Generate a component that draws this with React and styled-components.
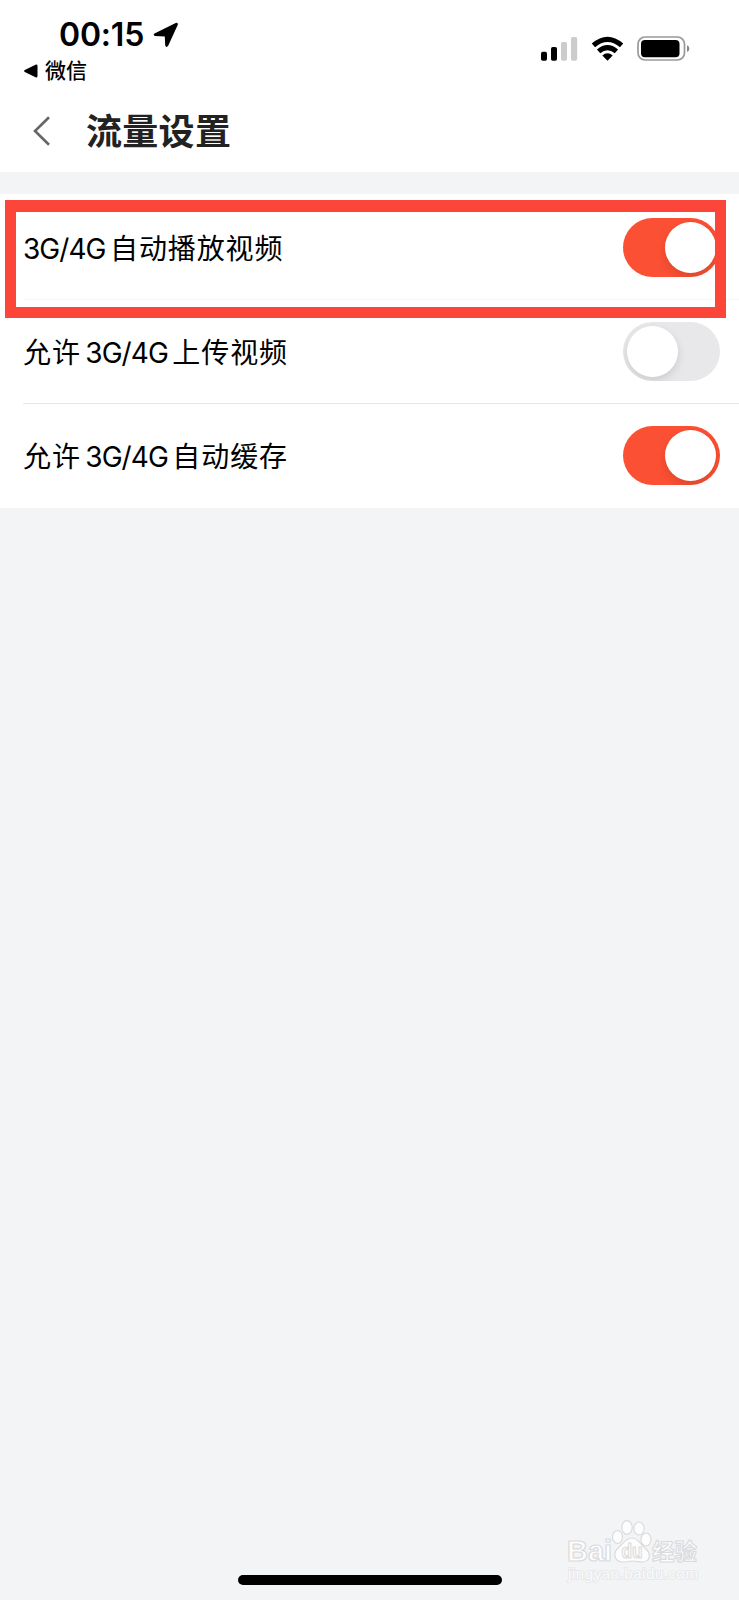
import React from "react";
import styled, { createGlobalStyle } from "styled-components";

const GlobalStyle = createGlobalStyle`
  *, *::before, *::after { box-sizing: border-box; }
  body { margin: 0; background: #f3f4f6; }
`;

const Screen = styled.main`
  position: relative;
  display: flex;
  flex-direction: column;
  width: 739px;
  height: 1600px;
  overflow: hidden;
  background: #f3f4f6;
  color: #000;
  font-family: Inter, "Noto Sans CJK SC", sans-serif;
`;

const StatusBar = styled.header`
  display: flex;
  justify-content: space-between;
  height: 90px;
  padding: 18px 49px 0 24px;
  background: #fff;
`;

const StatusLeft = styled.div`
  display: flex;
  flex-direction: column;
`;

const Clock = styled.div`
  display: flex;
  align-items: center;
  gap: 9px;
  height: 33px;
  padding-left: 35px;
  font-size: 32px;
  font-weight: 600;
  line-height: 33px;
  letter-spacing: -0.2px;
`;

const BackToApp = styled.div`
  display: flex;
  align-items: center;
  gap: 7px;
  height: 24px;
  margin-top: 8px;
  font-size: 21px;
  font-weight: 500;
  line-height: 24px;
`;

const StatusIcons = styled.div`
  display: flex;
  align-items: flex-start;
  padding-top: 18px;
`;

const StatusIcon = styled.svg`
  display: block;
  margin-left: ${({ $gap }) => $gap || 0}px;
`;

const NavBar = styled.nav`
  display: flex;
  align-items: center;
  gap: 35px;
  height: 82px;
  padding-left: 33px;
  background: #fff;
`;

const Title = styled.h1`
  margin: 0;
  padding-top: 2px;
  color: #222;
  font-size: 36px;
  font-weight: 700;
  line-height: 48px;
  letter-spacing: 0.3px;
`;

const Settings = styled.section`
  display: flex;
  flex-direction: column;
  margin-top: 22px;
  background: #fff;
`;

const Row = styled.div`
  display: flex;
  align-items: center;
  justify-content: space-between;
  height: ${({ $height }) => $height}px;
  margin-left: 23px;
  padding: ${({ $top }) => $top || 0}px 19px ${({ $bottom }) => $bottom || 0}px 0;
  border-bottom: ${({ $divider }) => ($divider ? `1px solid ${$divider}` : "none")};
`;

const Label = styled.div`
  display: flex;
  align-items: center;
  gap: 4.5px;
  padding-top: 3px;
  font-size: 28px;
  line-height: 42px;
  white-space: nowrap;
`;

const Latin = styled.span`
  letter-spacing: -0.95px;
`;

const Han = styled.span`
  letter-spacing: 0.9px;
`;

const Switch = styled.span`
  display: flex;
  justify-content: ${({ $on }) => ($on ? "flex-end" : "flex-start")};
  width: 97px;
  height: 59px;
  padding: 4px;
  overflow: hidden;
  border-radius: 30px;
  background: ${({ $on }) => ($on ? "#fb5033" : "#e8e8eb")};
`;

const Thumb = styled.span`
  width: 51px;
  height: 51px;
  border-radius: 50%;
  background: #fff;
  box-shadow: 0 4px 10px rgba(0, 0, 0, 0.12);
`;

const Highlight = styled.div`
  position: absolute;
  top: 200px;
  left: 5px;
  width: 721px;
  height: 118px;
  border: 11px solid #fd463a;
  border-top-width: 12px;
`;

const HomeIndicator = styled.div`
  position: absolute;
  bottom: 15px;
  left: 238px;
  width: 264px;
  height: 10px;
  border-radius: 5px;
  background: #000;
`;

const Watermark = styled.svg`
  position: absolute;
  right: 34px;
  bottom: 9px;
  font-family: "Liberation Sans", "Noto Sans CJK SC", sans-serif;
`;

const rows = [
  { parts: ["3G/4G", "自动播放视频"], on: true, height: 106, top: 1, divider: "#f6f6f6" },
  { parts: ["允许", "3G/4G", "上传视频"], on: false, height: 104, divider: "#e6e6e6" },
  { parts: ["允许", "3G/4G", "自动缓存"], on: true, height: 104, bottom: 2 },
];

function LocationArrow() {
  return (
    <StatusIcon width="26" height="26" viewBox="0 0 26 26">
      <path d="M2 11.2 L22.7 .9 Q25.3 .2 24.7 3 L15.3 23.6 Q13.3 26.6 12.2 23.3 L11.8 14.4 L2.2 13.9 Q-.8 12.8 2 11.2Z" />
    </StatusIcon>
  );
}

function Signal() {
  return (
    <StatusIcon width="38" height="25" viewBox="0 0 38 25">
      <rect x="1" y="15.8" width="6" height="9" rx="1.7" />
      <rect x="11" y="11" width="6" height="13.8" rx="1.7" />
      <rect x="21" y="6" width="6" height="18.8" rx="1.7" fill="#ccc" />
      <rect x="31" y="1" width="6.2" height="23.8" rx="1.7" fill="#ccc" />
    </StatusIcon>
  );
}

function Wifi() {
  return (
    <StatusIcon $gap={13} width="33" height="25" viewBox="0 0 33 25">
      <g fill="none" stroke="#000" strokeWidth="5">
        <path d="M2.4 9.4 Q16.5 -2.8 30.6 9.4" />
        <path d="M7.6 15.4 Q16.5 7.8 25.4 15.4" />
      </g>
      <path d="M11.3 19.4 Q16.5 15 21.7 19.4 L16.5 24.8Z" />
    </StatusIcon>
  );
}

function Battery() {
  return (
    <StatusIcon $gap={13} width="53" height="25" viewBox="0 0 53 25">
      <rect x="1" y="1" width="46.5" height="23" rx="7" fill="none" stroke="#999" strokeWidth="1.7" />
      <rect x="4" y="4" width="38.5" height="17.3" rx="4" />
      <path d="M50 9.3 Q52.4 10.2 52.4 12.7 Q52.4 15 50 16Z" fill="#888" />
    </StatusIcon>
  );
}

function BaiduMark() {
  return (
    <Watermark width="142" height="72" viewBox="0 0 142 72">
      <g fill="#fdfdfd" stroke="#dadbdd" strokeWidth="1.2" strokeLinejoin="round">
        <text x="4" y="42" fontSize="29" fontWeight="700" textLength="45" lengthAdjust="spacingAndGlyphs">Bai</text>
        <text x="89" y="41" fontSize="23" fontWeight="700" textLength="45" lengthAdjust="spacingAndGlyphs">经验</text>
        <ellipse cx="54.5" cy="18" rx="5" ry="6.5" />
        <ellipse cx="64" cy="8.5" rx="5.2" ry="6.8" />
        <ellipse cx="76" cy="9.5" rx="5.2" ry="6.5" />
        <ellipse cx="83" cy="20.5" rx="5" ry="6.5" />
        <path d="M69 19 C63 19 60 25 55 29 C49 35 52 43 60 43 C66 43 64 42 69 42 C74 42 76 43 80 43 C88 42 88 34 82 29 C77 25 75 19 69 19Z" />
        <text x="58.5" y="39" fontSize="20" fontWeight="700" textLength="21" lengthAdjust="spacingAndGlyphs">du</text>
      </g>
      <text x="5" y="60" fontSize="15" fill="#fafbfc" stroke="#e5e6e8" strokeWidth="1.6" paintOrder="stroke" textLength="130">jingyan.baidu.com</text>
    </Watermark>
  );
}

function SettingRow({ parts, on, height, top, bottom, divider }) {
  return (
    <Row $height={height} $top={top} $bottom={bottom} $divider={divider}>
      <Label>
        {parts.map((part) =>
          part === "3G/4G" ? <Latin key={part}>{part}</Latin> : <Han key={part}>{part}</Han>
        )}
      </Label>
      <Switch $on={on}>
        <Thumb />
      </Switch>
    </Row>
  );
}

export default function App() {
  return (
    <Screen>
      <GlobalStyle />
      <StatusBar>
        <StatusLeft>
          <Clock>
            00:15
            <LocationArrow />
          </Clock>
          <BackToApp>
            <StatusIcon width="14" height="14" viewBox="0 0 14 14">
              <path d="M.8 6 L11.5 .7 Q13.5 0 13.5 2 V12 Q13.5 14 11.5 13.2 L.8 8 Q-.6 7 .8 6Z" />
            </StatusIcon>
            微信
          </BackToApp>
        </StatusLeft>
        <StatusIcons>
          <Signal />
          <Wifi />
          <Battery />
        </StatusIcons>
      </StatusBar>
      <NavBar>
        <StatusIcon width="18" height="30" viewBox="0 0 18 30">
          <path d="M16 1.3 L2 15 L16 28.7" fill="none" stroke="#666" strokeWidth="2.6" />
        </StatusIcon>
        <Title>流量设置</Title>
      </NavBar>
      <Settings>
        {rows.map((row) => (
          <SettingRow key={row.parts.join("")} {...row} />
        ))}
      </Settings>
      <Highlight />
      <BaiduMark />
      <HomeIndicator />
    </Screen>
  );
}
